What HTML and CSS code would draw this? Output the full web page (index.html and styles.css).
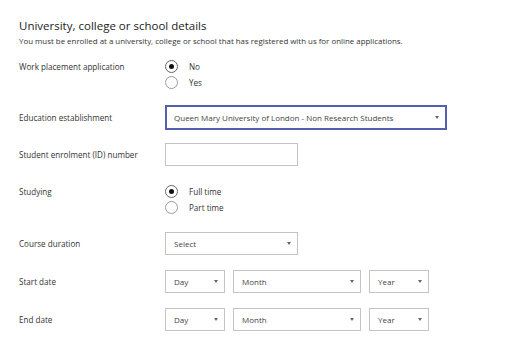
FILE: index.html
```html
<!DOCTYPE html>
<html lang="en">
<head>
    <meta charset="UTF-8">
    <meta name="viewport" content="width=device-width, initial-scale=1.0">
    <title>University, college or school details</title>
    <link rel="stylesheet" href="styles.css">
</head>
<body>
    <div class="page">
        <h2 class="title">University, college or school details</h2>
        <p class="intro">You must be enrolled at a university, college or school that has registered with us for online applications.</p>

        <div class="form">
            <div class="row row-work">
                <div class="label">Work placement application</div>
                <div class="radios">
                    <div class="radio-item"><span class="radio checked"></span><span>No</span></div>
                    <div class="radio-item"><span class="radio"></span><span>Yes</span></div>
                </div>
            </div>

            <div class="row row-edu">
                <div class="label">Education establishment</div>
                <div class="select select-wide active">
                    <span>Queen Mary University of London - Non Research Students</span>
                    <span class="arrow"></span>
                </div>
            </div>

            <div class="row row-id">
                <div class="label">Student enrolment (ID) number</div>
                <div class="input"></div>
            </div>

            <div class="row row-study">
                <div class="label">Studying</div>
                <div class="radios">
                    <div class="radio-item"><span class="radio checked"></span><span>Full time</span></div>
                    <div class="radio-item"><span class="radio"></span><span>Part time</span></div>
                </div>
            </div>

            <div class="row row-course">
                <div class="label">Course duration</div>
                <div class="select select-medium">
                    <span>Select</span>
                    <span class="arrow"></span>
                </div>
            </div>

            <div class="row row-date">
                <div class="label">Start date</div>
                <div class="date-group">
                    <div class="select select-day"><span>Day</span><span class="arrow"></span></div>
                    <div class="select select-month"><span>Month</span><span class="arrow"></span></div>
                    <div class="select select-year"><span>Year</span><span class="arrow"></span></div>
                </div>
            </div>

            <div class="row row-date">
                <div class="label">End date</div>
                <div class="date-group">
                    <div class="select select-day"><span>Day</span><span class="arrow"></span></div>
                    <div class="select select-month"><span>Month</span><span class="arrow"></span></div>
                    <div class="select select-year"><span>Year</span><span class="arrow"></span></div>
                </div>
            </div>
        </div>
    </div>
</body>
</html>
```

FILE: styles.css
```css
body {
    margin: 0;
    background: #ffffff;
    font-family: 'Open Sans', 'Noto Sans', sans-serif;
    color: #333333;
}

.page {
    padding: 18px 0 0 19px;
}

.title {
    margin: 0;
    font-size: 11.5px;
    font-weight: 400;
    line-height: 15px;
    color: #222222;
}

.intro {
    margin: 2px 0 0 0;
    font-size: 7.9px;
    line-height: 12px;
    color: #333333;
}

.form {
    display: flex;
    flex-direction: column;
}

.row {
    display: flex;
    align-items: center;
}

.label {
    width: 146px;
    flex-shrink: 0;
    font-size: 8.1px;
    line-height: 12px;
    color: #333333;
}

.row-work { margin-top: 13px; align-items: flex-start; }
.row-work .label { margin-top: 1px; }
.row-edu { margin-top: 16px; }
.row-id { margin-top: 13px; }
.row-study { margin-top: 19px; align-items: flex-start; }
.row-study .label { margin-top: 1px; }
.row-course { margin-top: 18px; }
.row-date { margin-top: 15px; }

.radios {
    display: flex;
    flex-direction: column;
    gap: 3px;
}

.radio-item {
    display: flex;
    align-items: center;
    gap: 11px;
    height: 13px;
    font-size: 8.1px;
    color: #333333;
}

.radio {
    width: 11px;
    height: 11px;
    border: 1px solid #9a9a9a;
    border-radius: 50%;
    display: flex;
    align-items: center;
    justify-content: center;
}

.radio.checked {
    border-color: #666666;
}

.radio.checked::after {
    content: '';
    width: 5px;
    height: 5px;
    border-radius: 50%;
    background: #111111;
}

.select,
.input {
    box-sizing: border-box;
    height: 23px;
    border: 1px solid #c4c4c4;
    background: #ffffff;
}

.select {
    display: flex;
    align-items: center;
    justify-content: space-between;
    padding: 0 6px 0 8px;
    font-size: 8px;
    color: #444444;
}

.select-wide {
    width: 282px;
    height: 25px;
}

.select.active {
    border: 2px solid #5560ad;
    padding-left: 7px;
}

.input,
.select-medium {
    width: 133px;
}

.date-group {
    display: flex;
    gap: 8px;
}

.select-day { width: 60px; }
.select-month { width: 128px; }
.select-year { width: 60px; }

.arrow {
    width: 0;
    height: 0;
    border-left: 2px solid transparent;
    border-right: 2px solid transparent;
    border-top: 3px solid #666666;
}
```
